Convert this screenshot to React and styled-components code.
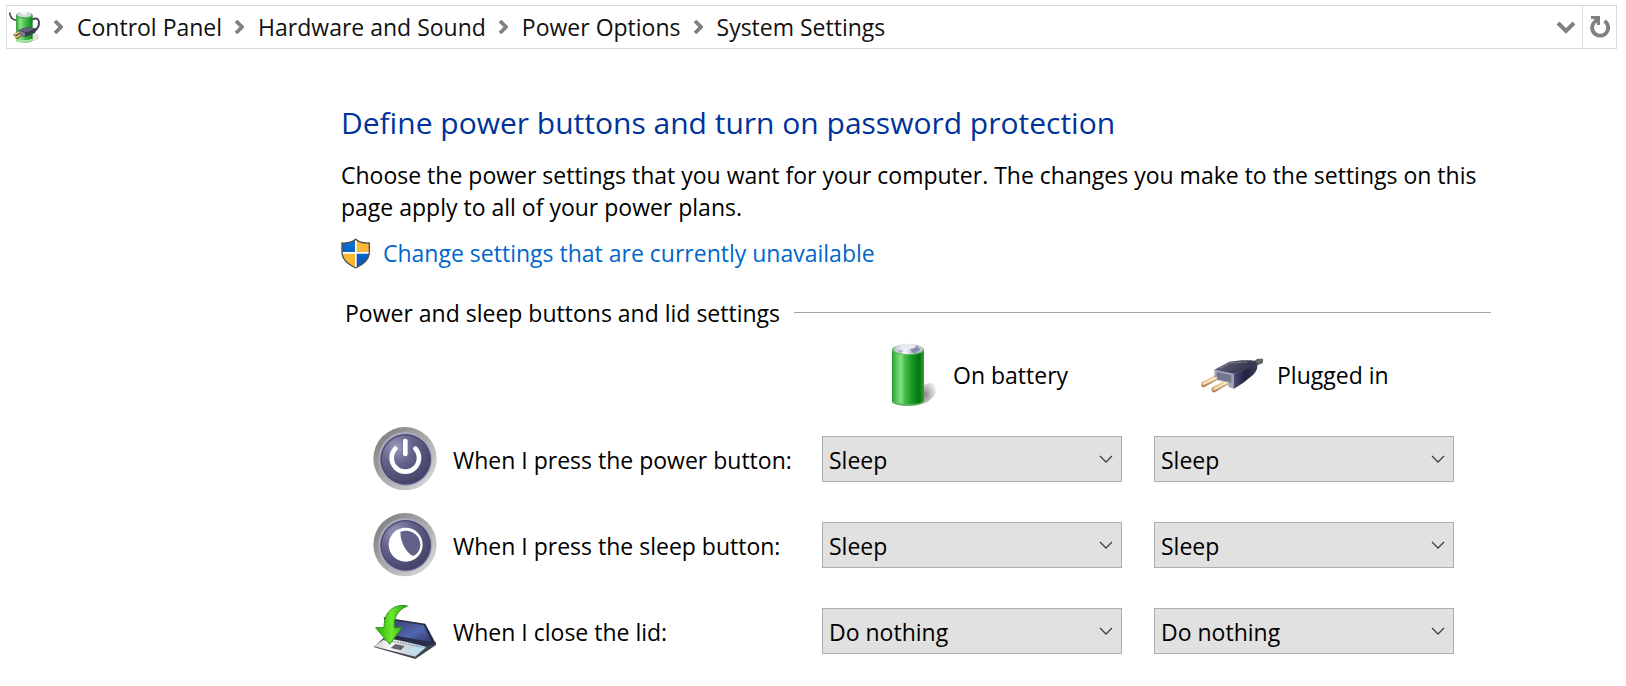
import React, { useState } from 'react';
import styled, { createGlobalStyle } from 'styled-components';

const GlobalStyle = createGlobalStyle`
    body {
        margin: 0;
        background: #fff;
        color: #000;
        font-family: "Segoe UI", "Open Sans", "Noto Sans", sans-serif;
        font-size: 23px;
        line-height: 32px;
    }
`;

const AddressBar = styled.nav`
    display: flex;
    align-items: stretch;
    height: 42px;
    margin: 5px 9px 0 6px;
    border: 1px solid #d9d9d9;
`;

const Crumbs = styled.ol`
    display: flex;
    flex: 1;
    align-items: center;
    margin: 0;
    padding: 0 0 0 2px;
    list-style: none;
    white-space: nowrap;
`;

const Crumb = styled.li`
    display: flex;
    align-items: center;
`;

const CrumbLink = styled.a`
    color: #111;
    text-decoration: none;
`;

const CrumbArrow = styled.svg`
    width: 10px;
    height: 14px;
    margin: 0 14px 0 12px;
`;

const BarButton = styled.button`
    display: flex;
    align-items: center;
    justify-content: center;
    width: 34px;
    padding: 0;
    border: 0;
    border-left: 1px solid ${(props) => (props.$divided ? '#d9d9d9' : 'transparent')};
    background: none;
`;

const Main = styled.main`
    padding: 54px 135px 24px 341px;
`;

const Title = styled.h1`
    margin: 0;
    color: #003399;
    font-size: 30px;
    font-weight: 400;
    line-height: 40px;
`;

const Intro = styled.p`
    margin: 16px 0 0;
`;

const AdminLink = styled.a`
    display: inline-flex;
    align-items: center;
    gap: 12px;
    margin-top: 14px;
    color: #0066cc;
    text-decoration: none;
`;

const GroupTitle = styled.h2`
    display: flex;
    align-items: center;
    gap: 14px;
    margin: 21px 0 0 4px;
    font-size: 23px;
    font-weight: 400;
    line-height: 32px;

    &::after {
        content: "";
        flex: 1;
        height: 1px;
        background: #a5a5a5;
    }
`;

const Settings = styled.div`
    padding: 9px 37px 0 32px;
`;

const Row = styled.div`
    display: grid;
    grid-template-columns: minmax(0, 1fr) 300px 300px;
    column-gap: 32px;
    align-items: center;
    height: 86px;
`;

const HeadRow = styled(Row)`
    height: 74px;
    margin-bottom: 4px;
`;

const Source = styled.div`
    grid-column: ${(props) => props.$column};
    display: flex;
    align-items: center;
    gap: 12px;
    padding-left: ${(props) => props.$indent}px;
`;

const RowLabel = styled.div`
    display: flex;
    align-items: center;
    gap: 16px;
    white-space: nowrap;
`;

const RowText = styled.span`
    padding-top: 2px;
`;

const SelectBox = styled.div`
    position: relative;
`;

const Select = styled.select`
    display: block;
    width: 100%;
    height: 46px;
    padding: 2px 40px 0 6px;
    border: 1px solid #adadad;
    border-radius: 0;
    background: #e1e1e1;
    color: #000;
    font: inherit;
    appearance: none;
`;

const SelectArrow = styled.svg`
    position: absolute;
    top: 19px;
    right: 9px;
    width: 14px;
    height: 9px;
    pointer-events: none;
`;

const Picture = styled.svg`
    flex: none;
    width: 64px;
    height: 64px;
`;

const PowerOptionsIcon = () => (
    <svg width="32" height="34" viewBox="27 27 96 102" aria-hidden="true">
        <defs>
            <linearGradient id="smallCell">
                <stop offset="0" stopColor="#2f9a35" />
                <stop offset=".25" stopColor="#8be58c" />
                <stop offset=".5" stopColor="#4cc552" />
                <stop offset="1" stopColor="#11801c" />
            </linearGradient>
        </defs>
        <ellipse cx="98" cy="108" rx="20" ry="12" fill="#e2e2e2" />
        <path d="M29 34c1 14 5 22 20 24" fill="none" stroke="#4a4a62" strokeWidth="5" />
        <path d="M48 44v72c0 5 10 9 25 9s25-4 25-9V44z" fill="url(#smallCell)" />
        <path d="M48 112c8 7 42 7 50 0v5c-4 10-46 10-50 0z" fill="#a6e3a6" />
        <ellipse cx="73" cy="43" rx="25" ry="10" fill="#4fae55" />
        <ellipse cx="73" cy="41" rx="21" ry="8" fill="#d5dbe6" />
        <ellipse cx="72" cy="36" rx="9" ry="5" fill="#f5f8fc" />
        <path d="M97 56c12-7 20-2 20 9 0 12-5 20-16 26" fill="none" stroke="#41415c" strokeWidth="6" />
        <path d="M44 102l17-9M50 110l19-10" stroke="#7d5425" strokeWidth="8" strokeLinecap="round" />
        <path d="M43 101l17-9M49 109l19-10" stroke="#f0cf98" strokeWidth="4" strokeLinecap="round" />
        <path d="M54 88l25-9 30 3-3 13-31 14-14-6z" fill="#3a3b4d" />
        <path d="M54 88l25-9 30 3-30 12z" fill="#616275" />
        <path d="M54 88l21 7v14l-14-7z" fill="#7c7d90" />
    </svg>
);

const ShieldIcon = () => (
    <svg width="30" height="31" viewBox="37 34 90 93" aria-hidden="true">
        <defs>
            <clipPath id="shieldShape">
                <path d="M81 38c9 8 24 12 41 11v28c0 23-17 36-41 47-24-11-41-24-41-47V49c17 1 32-3 41-11z" />
            </clipPath>
            <linearGradient id="shieldBlue" x2="0" y2="1">
                <stop offset="0" stopColor="#0873d4" />
                <stop offset="1" stopColor="#0754b8" />
            </linearGradient>
            <linearGradient id="shieldGold" x2="1" y2="1">
                <stop offset="0" stopColor="#ffc24a" />
                <stop offset="1" stopColor="#f9ad22" />
            </linearGradient>
        </defs>
        <g clipPath="url(#shieldShape)">
            <path d="M36 34h90v93H36z" fill="#fff" />
            <path d="M36 34h43v42H36zM84 81h43v46H84z" fill="url(#shieldBlue)" />
            <path d="M84 34h43v42H84zM36 81h43v46H36z" fill="url(#shieldGold)" />
        </g>
        <path
            d="M81 38c9 8 24 12 41 11v28c0 23-17 36-41 47-24-11-41-24-41-47V49c17 1 32-3 41-11z"
            fill="none"
            stroke="#505050"
            strokeWidth="4"
        />
    </svg>
);

const BatteryIcon = () => (
    <Picture viewBox="21 36 192 192" aria-hidden="true">
        <defs>
            <linearGradient id="cellBody">
                <stop offset="0" stopColor="#279b2c" />
                <stop offset=".13" stopColor="#57c55a" />
                <stop offset=".28" stopColor="#82e283" />
                <stop offset=".4" stopColor="#46bf4a" />
                <stop offset=".65" stopColor="#159423" />
                <stop offset=".85" stopColor="#04740c" />
                <stop offset="1" stopColor="#2fa238" />
            </linearGradient>
            <linearGradient id="cellTop">
                <stop offset="0" stopColor="#c2c2d4" />
                <stop offset=".4" stopColor="#f8f8fc" />
                <stop offset=".75" stopColor="#9d9dbb" />
                <stop offset="1" stopColor="#dcdce8" />
            </linearGradient>
            <radialGradient id="cellShade" cx=".15" cy=".55" r=".8">
                <stop offset="0" stopColor="#888" />
                <stop offset="1" stopColor="#888" stopOpacity="0" />
            </radialGradient>
        </defs>
        <path d="M158 164c16-10 36-12 48-2-2 24-20 46-48 58z" fill="url(#cellShade)" />
        <path d="M66 55v155c0 8 22 14 48 14s48-6 48-14V55z" fill="url(#cellBody)" />
        <path d="M66 209c8 13 88 13 96 0v3c-4 16-92 16-96 0z" fill="#5cae5e" />
        <ellipse cx="114" cy="56" rx="48" ry="16" fill="#5fbd65" />
        <ellipse cx="115" cy="55" rx="43" ry="15" fill="url(#cellTop)" />
        <path d="M94 46c4-10 38-11 44-1l-6 9H98z" fill="#e9e9f3" />
        <path d="M120 55l22-7 10 8-22 11z" fill="#8d8db1" />
        <path d="M82 57l18 2-9 8z" fill="#a9a9c4" />
    </Picture>
);

const PlugIcon = () => (
    <Picture viewBox="63 6 192 192" aria-hidden="true">
        <defs>
            <linearGradient id="plugTop" x2="1" y2=".4">
                <stop offset="0" stopColor="#74768b" />
                <stop offset=".5" stopColor="#4a4b60" />
                <stop offset="1" stopColor="#30314b" />
            </linearGradient>
            <linearGradient id="plugSide" x2="1">
                <stop offset="0" stopColor="#4c4d70" />
                <stop offset=".5" stopColor="#20213f" />
                <stop offset="1" stopColor="#404158" />
            </linearGradient>
            <linearGradient id="prong" x2=".45" y2="1">
                <stop offset="0" stopColor="#a87a4a" />
                <stop offset=".5" stopColor="#f3d6a4" />
                <stop offset="1" stopColor="#85552c" />
            </linearGradient>
        </defs>
        <path d="M64 123l54-26 6 14-52 28c-8 2-12-11-8-16z" fill="url(#prong)" />
        <path d="M96 138l54-28 6 14-52 30c-9 2-13-11-8-16z" fill="url(#prong)" />
        <path d="M218 64l14-11h17v13l-20 8z" fill="#646762" />
        <path d="M103 86l58 11v46l-16-6v-15l-29-3-13-10z" fill="#a3a5bd" />
        <path d="M110 93l44 9v24l-44-13z" fill="#747690" />
        <path d="M103 86l45-24c22-4 52-6 76-3l8 10-18 13-53 16z" fill="url(#plugTop)" />
        <path d="M161 98l48-16 23-14c2 12-3 26-16 36l-28 23-27 17z" fill="url(#plugSide)" />
        <path d="M120 82l31-16 50-3" fill="none" stroke="#8c8ea1" strokeWidth="2" />
        <path d="M69 130l42-21M102 146l41-23" stroke="#fff3d5" strokeWidth="4" />
    </Picture>
);

/* round metal push button, the sign on it is passed as children */
const RoundButtonIcon = ({ id, children }) => (
    <Picture viewBox="24 21 192 192" aria-hidden="true">
        <defs>
            <linearGradient id={id + 'Rim'} x2="1" y2="1">
                <stop offset="0" stopColor="#777" />
                <stop offset=".5" stopColor="#aaa" />
                <stop offset="1" stopColor="#e4e4e4" />
            </linearGradient>
            <radialGradient id={id + 'Face'} cx=".3" cy=".25" r=".8">
                <stop offset="0" stopColor="#9c9cbd" />
                <stop offset=".45" stopColor="#62628b" />
                <stop offset="1" stopColor="#444469" />
            </radialGradient>
        </defs>
        <circle cx="120" cy="116" r="95" fill={`url(#${id}Rim)`} />
        <circle cx="121" cy="117" r="81" fill="#a9a9bb" />
        <circle cx="122" cy="118" r="76" fill="#484873" />
        <circle cx="122" cy="118" r="72" fill={`url(#${id}Face)`} />
        {children}
    </Picture>
);

const PowerIcon = () => (
    <RoundButtonIcon id="power">
        <g fill="none" stroke="#fff" strokeLinecap="round">
            <path d="M91 86a41 41 0 1 0 60 0" strokeWidth="14" />
            <path d="M121 63v39" strokeWidth="14" />
        </g>
    </RoundButtonIcon>
);

const SleepIcon = () => (
    <RoundButtonIcon id="sleep">
        <circle cx="122" cy="116" r="51" fill="#fff" />
        <path d="M106 78c24-12 56 3 60 35 1 18-9 31-22 37-20-9-38-41-38-72z" fill="#62628a" />
    </RoundButtonIcon>
);

const LidIcon = () => (
    <Picture viewBox="24 12 192 192" aria-hidden="true">
        <defs>
            <linearGradient id="lidScreen" x2="1" y2="1">
                <stop offset="0" stopColor="#333a69" />
                <stop offset=".6" stopColor="#5267af" />
                <stop offset="1" stopColor="#303762" />
            </linearGradient>
            <linearGradient id="lidBase" x2="1">
                <stop offset="0" stopColor="#c9cdd2" />
                <stop offset=".3" stopColor="#fafbfc" />
                <stop offset=".6" stopColor="#d3d8de" />
                <stop offset="1" stopColor="#a0cbe2" />
            </linearGradient>
            <linearGradient id="lidArrow" x2="1">
                <stop offset="0" stopColor="#26ae0b" />
                <stop offset=".5" stopColor="#6ee82e" />
                <stop offset="1" stopColor="#249d12" />
            </linearGradient>
        </defs>
        <path d="M26 156l125 36 62-42v-8L62 123z" fill="#42454d" />
        <path d="M26 154l38-25 122 24-35 32z" fill="url(#lidBase)" />
        <path d="M57 135l70 12 48 11" fill="none" stroke="#8f949c" strokeWidth="4" strokeDasharray="5 3" />
        <path d="M91 147l28 6-11 13-31-7z" fill="#62656d" />
        <path d="M126 168l24-13 31 4-29 22z" fill="#bfe0ef" />
        <path d="M56 67l125 19 31 59-29 10L74 127z" fill="#292d48" />
        <path d="M65 73l111 18 24 51-118-22z" fill="url(#lidScreen)" />
        <path d="M127 33c-16-5-44 0-58 20-9 12-12 28-12 45H32l42 50 37-50-23 1c-2-30 8-53 39-66z" fill="url(#lidArrow)" stroke="#249711" strokeWidth="3" />
    </Picture>
);

const actions = ['Do nothing', 'Sleep', 'Hibernate', 'Shut down', 'Turn off the display'];

const rows = [
    { label: 'When I press the power button:', icon: PowerIcon, value: 'Sleep' },
    { label: 'When I press the sleep button:', icon: SleepIcon, value: 'Sleep' },
    { label: 'When I close the lid:', icon: LidIcon, value: 'Do nothing' },
];

const path = ['Control Panel', 'Hardware and Sound', 'Power Options', 'System Settings'];

const ActionSelect = ({ label, initial }) => {
    const [value, setValue] = useState(initial);

    return (
        <SelectBox>
            <Select aria-label={label} value={value} onChange={(e) => setValue(e.target.value)}>
                {actions.map((action) => (
                    <option key={action}>{action}</option>
                ))}
            </Select>
            <SelectArrow viewBox="0 0 14 9" aria-hidden="true">
                <path d="M1 1l6 6 6-6" fill="none" stroke="#404040" strokeWidth="1.3" />
            </SelectArrow>
        </SelectBox>
    );
};

const App = () => {
    return (
        <>
            <GlobalStyle />
            <AddressBar aria-label="Address">
                <Crumbs>
                    <Crumb>
                        <PowerOptionsIcon />
                    </Crumb>
                    {path.map((name) => (
                        <Crumb key={name}>
                            <CrumbArrow viewBox="0 0 10 14" aria-hidden="true">
                                <path d="M2 1l6 6-6 6" fill="none" stroke="#808080" strokeWidth="3.8" />
                            </CrumbArrow>
                            <CrumbLink href="#">{name}</CrumbLink>
                        </Crumb>
                    ))}
                </Crumbs>
                <BarButton type="button" aria-label="Previous locations">
                    <svg width="20" height="13" viewBox="0 0 20 13" aria-hidden="true">
                        <path d="M2 2l8 8 8-8" fill="none" stroke="#808080" strokeWidth="4" />
                    </svg>
                </BarButton>
                <BarButton type="button" aria-label="Refresh" $divided>
                    <svg width="20" height="22" viewBox="0 0 20 22" aria-hidden="true">
                        <path d="M14.500 5A8 8 0 1 1 4.500 6L8 3" fill="none" stroke="#808080" strokeWidth="3.8" />
                        <path d="M1 0h9v9H7V3H1z" fill="#808080" />
                    </svg>
                </BarButton>
            </AddressBar>

            <Main>
                <Title>Define power buttons and turn on password protection</Title>
                <Intro>
                    Choose the power settings that you want for your computer. The changes you make to the
                    settings on this page apply to all of your power plans.
                </Intro>
                <AdminLink href="#">
                    <ShieldIcon />
                    Change settings that are currently unavailable
                </AdminLink>

                <GroupTitle>Power and sleep buttons and lid settings</GroupTitle>
                <Settings>
                    <HeadRow>
                        <Source $column={2} $indent={55}>
                            <BatteryIcon />
                            On battery
                        </Source>
                        <Source $column={3} $indent={47}>
                            <PlugIcon />
                            Plugged in
                        </Source>
                    </HeadRow>
                    {rows.map(({ label, icon: Icon, value }) => (
                        <Row key={label}>
                            <RowLabel>
                                <Icon />
                                <RowText>{label}</RowText>
                            </RowLabel>
                            <ActionSelect label={label + ' On battery'} initial={value} />
                            <ActionSelect label={label + ' Plugged in'} initial={value} />
                        </Row>
                    ))}
                </Settings>
            </Main>
        </>
    );
};

export default App;
